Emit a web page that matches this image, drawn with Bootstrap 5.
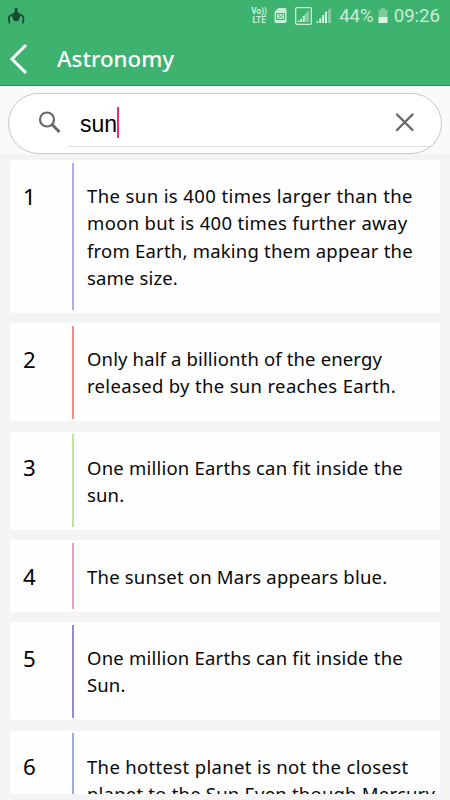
<!DOCTYPE html>
<html lang="en">
<head>
<meta charset="utf-8">
<meta name="viewport" content="width=device-width, initial-scale=1">
<title>Astronomy</title>
<link href="https://cdn.jsdelivr.net/npm/bootstrap@5.3.0/dist/css/bootstrap.min.css" rel="stylesheet">
<style>
body{height:800px;background:#f4f4f4;color:#080808;font-family:"Noto Sans",sans-serif}
svg{display:block;flex:none}
.app-head{height:86px;background:#3eb370;border-bottom:1px solid #00a651}
.status{height:32px;padding:0 10px 0 7px;color:#c9eed8;font:18.6px/32px Roboto,sans-serif}
.lte{font:700 8.3px/9.5px Roboto,sans-serif;width:16px;margin-right:7px}
.lte div{white-space:nowrap}
.battery{margin:0 6px 0 4px}
.titlebar{height:53px;padding-left:9px}
.titlebar h1{font-size:22.3px;line-height:30px;font-weight:500;margin-left:28px}
.search-band{height:68px;background:#fafafa;padding:7px 8px 0}
.search-box{height:61px;border:1px solid #c8c8c8;padding-left:29px}
.query{height:53px;border-bottom:1px solid #ddd;margin-left:7px;padding-left:11px;margin-right:11px;font:23px/60px "Liberation Sans",sans-serif;color:#000}
.caret{width:2px;height:31px;background:#f52b6f;margin-top:13px}
.facts{height:640px;padding:6px 10px 0}
.fact{background:#fefefe;padding:2.7px 0;margin-bottom:10.25px;border-radius:2px}
.num{width:62px;padding:20px 0 0 13px;font-size:22.3px;line-height:27px;color:#000}
.rule{width:2px}
.words{padding:19.7px 0 19.2px 13px;font-size:18.5px;line-height:27.1px}
.words span{display:block;white-space:nowrap}
.s1{letter-spacing:.14px}.s2{letter-spacing:.21px}.s3{letter-spacing:.33px}.s4{letter-spacing:.4px}
</style>
<script src="https://cdn.jsdelivr.net/npm/bootstrap@5.3.0/dist/js/bootstrap.bundle.min.js"></script>
</head>
<body class="overflow-hidden">
<header class="app-head text-white">
  <div class="status d-flex align-items-center">
    <svg width="19" height="18" viewBox="0 0 19 18" fill="none" stroke="#174c32"><path d="M7.800 1h2.700v4l2 1.500.6 3.500-1.800 4H7l-1.800-4 .6-3.500 2-1.500z" fill="#174c32" stroke="none"/><path d="M6.500 7.300C3 8 1.500 10 1.800 12l.8 4.500M11.800 7.300c3.500.7 5 2.700 4.700 4.700l-.8 4.500" stroke-width="1.700"/></svg>
    <div class="lte ms-auto text-center"><div>Vo))</div><div>LTE</div></div>
    <svg width="13" height="16" viewBox="0 0 13 16"><path d="M4.500 0H11q1.500 0 1.500 1.500v12q0 1.500-1.500 1.500H2Q.5 15 .5 13.500V4z" fill="#c9eed8"/><path d="M2.500 5.500h8v6h-8zM4 6.500l5 4m0-4-5 4" fill="none" stroke="#3eb370"/></svg>
    <svg class="ms-2" width="17" height="18" viewBox="0 0 17 18"><rect x=".7" y=".7" width="15.600" height="16.600" rx="1" fill="none" stroke="#c9eed8" stroke-width="1.300"/><path d="M9.500 15V7.500L14 3v12z" fill="#82cda1"/><path d="M3 15v-1.500h1.500V15zM5.200 15v-3h1.700v3zM7.700 15V9h2v6z" fill="#d5f5e1"/></svg>
    <svg width="15" height="16" viewBox="0 0 15 16" class="ms-1 me-2"><path d="M.5 15v-1.700h1.800V15zM3.300 15v-4.500h2V15zM6.200 15V7h2v8zM9 15V4l2-1v12z" fill="#d5f5e1"/><path d="M12 15V2l3-2v15z" fill="#82cda1"/></svg>
    <span>44%</span>
    <svg class="battery" width="10" height="16" viewBox="0 0 10 16"><path d="M3 0h4v2h2.500v7h-9V2H3z" fill="#7ecb9e"/><path d="M.5 9h9v6h-9z" fill="#d9f7e4"/></svg>
    <span>09:26</span>
  </div>
  <div class="titlebar d-flex align-items-center">
    <svg width="20" height="32" viewBox="0 0 20 32"><path d="M17 2 3 16l14 14" fill="none" stroke="#fff" stroke-width="3"/></svg>
    <h1 class="mb-0">Astronomy</h1>
  </div>
</header>
<section class="search-band">
  <div class="search-box d-flex bg-white rounded-pill">
    <svg class="mt-3" width="24" height="26" viewBox="0 0 24 26" fill="none" stroke="#686868"><circle cx="9" cy="9.500" r="7" stroke-width="2.200"/><path d="m14 14.500 7.500 7.500" stroke-width="3"/></svg>
    <div class="query d-flex flex-grow-1">sun<i class="caret"></i>
      <svg class="ms-auto" width="35" height="57" viewBox="0 0 35 57"><path d="m2 20.500 15.500 15.500m0-15.500L2 36" fill="none" stroke="#686868" stroke-width="2.400" stroke-linecap="round"/></svg>
    </div>
  </div>
</section>
<main class="facts overflow-hidden">
  <article class="fact d-flex"><div class="num">1</div><div class="rule" style="background:#b7a7e3"></div><div class="words"><span class="s4">The sun is 400 times larger than the</span><span class="s3">moon but is 400 times further away</span><span class="s2">from Earth, making them appear the</span><span class="s1">same size.</span></div></article>
  <article class="fact d-flex"><div class="num">2</div><div class="rule" style="background:#ef8f87"></div><div class="words"><span class="s1">Only half a billionth of the energy</span><span class="s3">released by the sun reaches Earth.</span></div></article>
  <article class="fact d-flex"><div class="num">3</div><div class="rule" style="background:#bde79a"></div><div class="words"><span class="s2">One million Earths can fit inside the</span><span class="s1">sun.</span></div></article>
  <article class="fact d-flex"><div class="num">4</div><div class="rule" style="background:#dfa3bf"></div><div class="words"><span class="s2">The sunset on Mars appears blue.</span></div></article>
  <article class="fact d-flex"><div class="num">5</div><div class="rule" style="background:#918bd5"></div><div class="words"><span class="s2">One million Earths can fit inside the</span><span class="s1">Sun.</span></div></article>
  <article class="fact d-flex"><div class="num">6</div><div class="rule" style="background:#93aedd"></div><div class="words"><span class="s3">The hottest planet is not the closest</span><span class="s2">planet to the Sun Even though Mercury</span></div></article>
</main>
</body>
</html>
